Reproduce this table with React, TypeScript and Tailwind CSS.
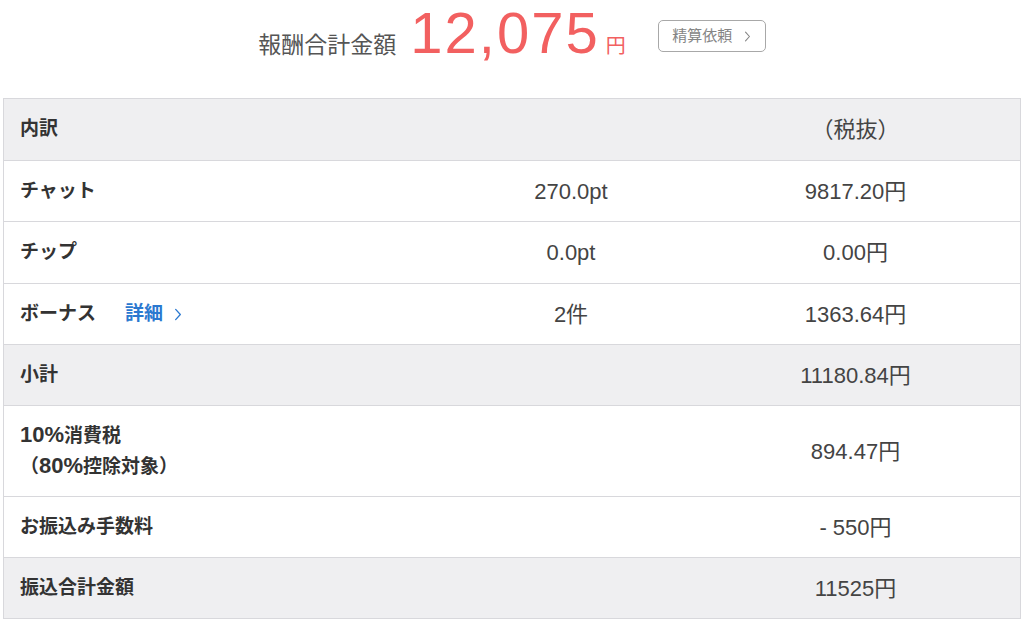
import React from "react";

const FONT = { fontFamily: '"Liberation Sans", "Noto Sans CJK JP", sans-serif' };

type Row = {
  label: React.ReactNode;
  mid?: string;
  val: string;
  gray?: boolean;
  h: string;
};

function Chevron({ className }: { className?: string }) {
  return (
    <svg viewBox="0 0 8 14" className={className} fill="none" stroke="currentColor" strokeWidth="1.4" strokeLinecap="round" strokeLinejoin="round">
      <path d="M1.5 1.5 L6.5 7 L1.5 12.5" />
    </svg>
  );
}

export default function App() {
  const rows: Row[] = [
    { label: "内訳", val: "（税抜）", gray: true, h: "h-[62px]" },
    { label: "チャット", mid: "270.0pt", val: "9817.20円", h: "h-[61px]" },
    { label: "チップ", mid: "0.0pt", val: "0.00円", h: "h-[62px]" },
    {
      label: (
        <span className="flex items-center">
          <span>ボーナス</span>
          <span className="ml-[29px] flex items-center text-[#2a78d0]">
            詳細
            <Chevron className="ml-[11px] h-[13px] w-[8px]" />
          </span>
        </span>
      ),
      mid: "2件",
      val: "1363.64円",
      h: "h-[61px]",
    },
    { label: "小計", val: "11180.84円", gray: true, h: "h-[61px]" },
    {
      label: (
        <span className="flex flex-col leading-[30px]">
          <span>
            <span className="text-[22px]">10%</span>消費税
          </span>
          <span>
            （<span className="text-[22px]">80%</span>控除対象）
          </span>
        </span>
      ),
      val: "894.47円",
      h: "h-[91px]",
    },
    { label: "お振込み手数料", val: "- 550円", h: "h-[61px]" },
    { label: "振込合計金額", val: "11525円", gray: true, h: "h-[61px]" },
  ];

  return (
    <div className="min-h-[621px] w-full bg-white" style={FONT}>
      <div className="flex h-[98px] items-start justify-center">
        <div className="flex items-baseline leading-none">
          <span className="text-[23px] leading-none text-[#555]">報酬合計金額</span>
          <span className="ml-[14px] text-[58px] leading-[65px] tracking-[2px] text-[#f26060]">12,075</span>
          <span className="ml-[6px] text-[20px] leading-none text-[#f26060]">円</span>
        </div>
        <button className="ml-[32px] mt-[20px] flex h-[32px] w-[108px] items-center justify-center rounded-[5px] border border-[#a8a8a8] text-[15px] text-[#858585]">
          精算依頼
          <Chevron className="ml-[12px] h-[11px] w-[7px]" />
        </button>
      </div>
      <div className="mx-[3px] border-x border-b border-[#d8d8dc]">
        {rows.map((r, i) => (
          <div
            key={i}
            className={`grid grid-cols-[447px_240px_1fr] items-center border-t border-[#d8d8dc] ${r.h} ${r.gray ? "bg-[#efeff1]" : "bg-white"}`}
          >
            <div className="pl-[16px] text-[19px] font-semibold text-[#333]">{r.label}</div>
            <div className="text-center text-[22px] text-[#444]">{r.mid}</div>
            <div className="text-center text-[22px] text-[#444]">{r.val}</div>
          </div>
        ))}
      </div>
    </div>
  );
}
